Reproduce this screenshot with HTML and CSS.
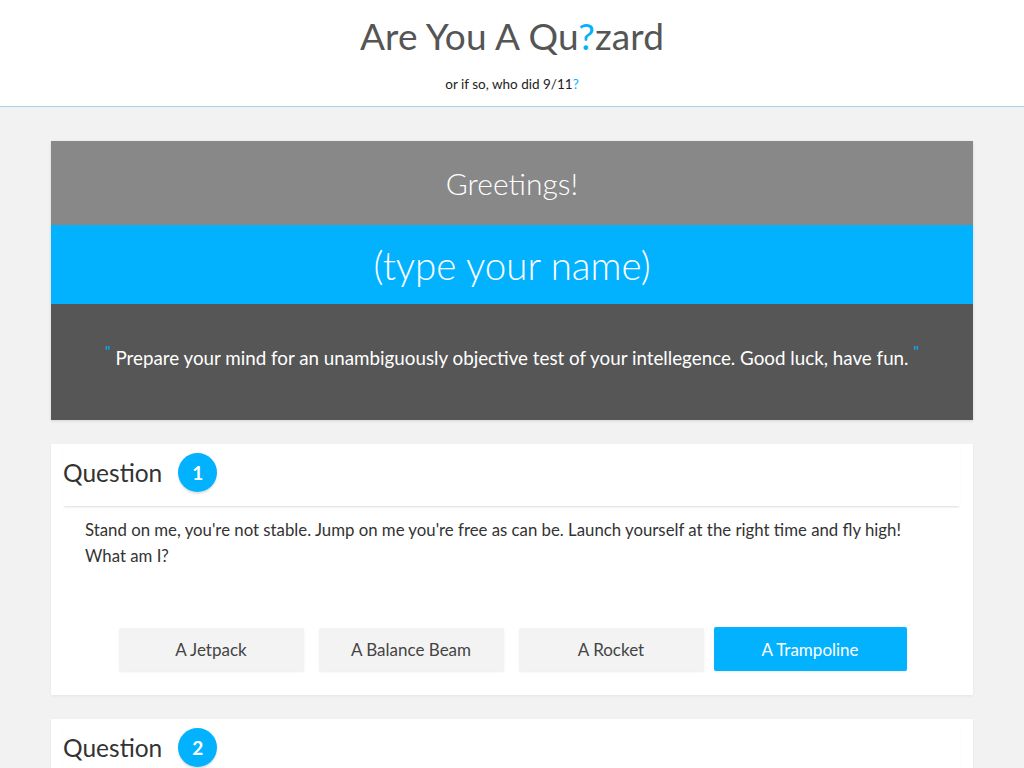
FILE: index.html
```html
<!DOCTYPE html>
<html>
<head>
<meta charset="utf-8">
<title>Are You A Quizard</title>
<link rel="stylesheet" href="styles.css">
</head>
<body>
<header class="site-header">
  <h1 class="title">Are You A Qu<span class="accent">?</span>zard</h1>
  <p class="subtitle">or if so, who did 9/11<span class="accent">?</span></p>
</header>
<main class="content">
  <section class="hero">
    <div class="hero-greeting">Greetings!</div>
    <div class="hero-name">(type your name)</div>
    <div class="hero-quote"><span class="qmark">"</span><span class="quote-text">Prepare your mind for an unambiguously objective test of your intellegence. Good luck, have fun.</span><span class="qmark">"</span></div>
  </section>
  <section class="question-card">
    <div class="question-head">
      <span class="question-label">Question</span>
      <span class="question-num">1</span>
    </div>
    <p class="question-text">Stand on me, you're not stable. Jump on me you're free as can be. Launch yourself at the right time and fly high!<br>What am I?</p>
    <div class="answers">
      <button class="answer">A Jetpack</button>
      <button class="answer">A Balance Beam</button>
      <button class="answer">A Rocket</button>
      <button class="answer answer-active">A Trampoline</button>
    </div>
  </section>
  <section class="question-card">
    <div class="question-head">
      <span class="question-label">Question</span>
      <span class="question-num">2</span>
    </div>
    <p class="question-text">&nbsp;</p>
  </section>
</main>
</body>
</html>
```

FILE: styles.css
```css
* { box-sizing: border-box; }
html, body { margin: 0; padding: 0; }
body {
  background: #f2f2f2;
  font-family: "Lato", "Open Sans", sans-serif;
  color: #333;
  height: 768px;
  overflow: hidden;
}
.accent { color: #03b1fc; }
.site-header {
  background: #fff;
  height: 107px;
  border-bottom: 1px solid #a9d2e4;
  text-align: center;
  padding-top: 13px;
}
.title {
  margin: 0;
  font-size: 37px;
  font-weight: 400;
  color: #555;
  line-height: 46px;
  letter-spacing: 0.1px;
}
.subtitle {
  margin: 17px 0 0;
  font-size: 13.5px;
  color: #222;
  line-height: 16px;
}
.content {
  padding: 34px 51px 0;
  display: flex;
  flex-direction: column;
  gap: 24px;
}
.hero {
  box-shadow: 0 1px 3px rgba(0,0,0,0.12);
}
.hero-greeting {
  background: #888;
  color: #fff;
  height: 84px;
  display: flex;
  align-items: center;
  justify-content: center;
  font-size: 30px;
  font-weight: 300;
}
.hero-name {
  background: #03b2ff;
  color: #fff;
  height: 79px;
  display: flex;
  align-items: center;
  justify-content: center;
  font-size: 38.5px;
  font-weight: 300;
}
.hero-quote {
  background: #565656;
  color: #fff;
  height: 116px;
  display: flex;
  align-items: center;
  justify-content: center;
  font-size: 18.8px;
  font-weight: 400;
  padding-bottom: 10px;
}
.quote-text {
  padding: 0 5px;
}
.qmark {
  color: #03b1fc;
  font-size: 15px;
  line-height: 1;
  align-self: flex-start;
  margin-top: 40px;
}
.question-card {
  background: #fff;
  padding: 0 13px 24px 12px;
  box-shadow: 0 1px 3px rgba(0,0,0,0.06);
}
.question-head {
  height: 62px;
  display: flex;
  align-items: center;
  gap: 16px;
  padding-bottom: 5px;
  box-shadow: 0 2px 2px -1px rgba(0,0,0,0.14);
}
.question-label {
  font-size: 24.5px;
  color: #333;
  font-weight: 400;
}
.question-num {
  width: 39px;
  height: 39px;
  border-radius: 50%;
  background: #03b2ff;
  color: #fff;
  font-size: 19px;
  font-weight: 700;
  display: flex;
  align-items: center;
  justify-content: center;
  box-shadow: 0 2px 2px rgba(0,0,0,0.12);
}
.question-text {
  margin: 11px 0 0;
  padding: 0 22px;
  font-size: 16.8px;
  line-height: 26px;
  color: #333;
  height: 110px;
}
.answers {
  display: flex;
  justify-content: center;
  align-items: center;
  gap: 15px;
  padding-left: 2px;
}
.answer {
  width: 185px;
  height: 43px;
  border: none;
  border-radius: 2px;
  background: #f3f3f3;
  color: #444;
  font-family: inherit;
  font-size: 17px;
  box-shadow: 0 1px 2px rgba(0,0,0,0.08);
}
.answer-active {
  width: 193px;
  height: 44px;
  background: #03b2ff;
  color: #fff;
  margin-left: -5px;
}
```
